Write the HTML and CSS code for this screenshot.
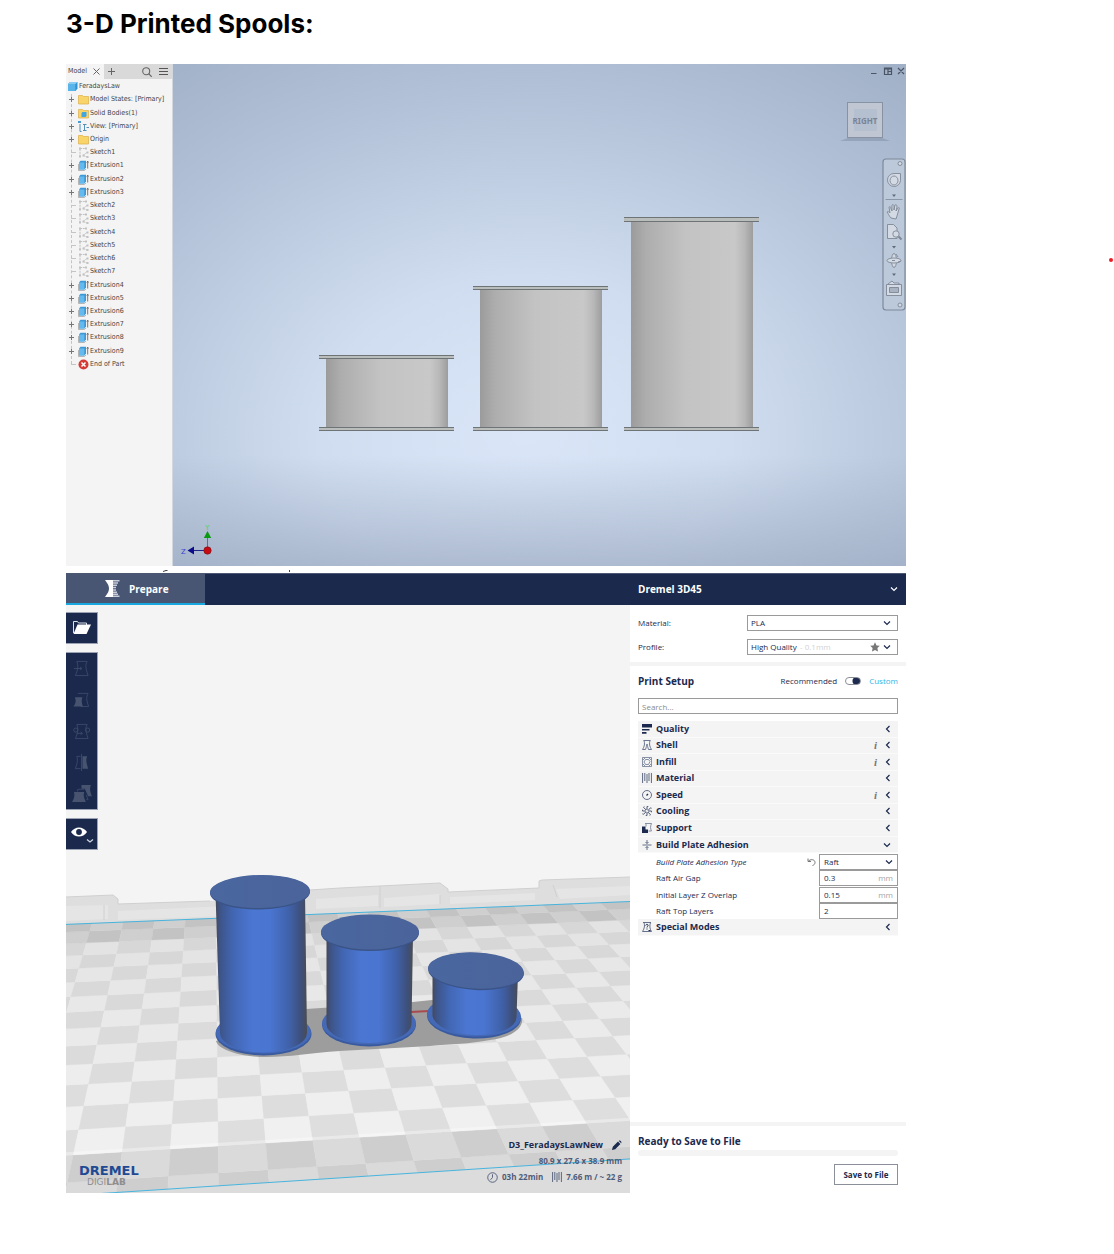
FILE: index.html
```html
<!DOCTYPE html>
<html lang="en">
<head>
<meta charset="utf-8">
<title>3-D Printed Spools</title>
<link rel="stylesheet" href="styles.css">
</head>
<body>
<svg class="defs" aria-hidden="true">
  <defs>
    <linearGradient id="steel" x1="0" x2="1" y1="0" y2="0">
      <stop offset="0" stop-color="#9b9b9b"/><stop offset=".12" stop-color="#adadad"/><stop offset=".45" stop-color="#c3c3c3"/>
      <stop offset=".85" stop-color="#c8c8c8"/><stop offset=".93" stop-color="#b8b8b8"/><stop offset="1" stop-color="#9d9d9d"/>
    </linearGradient>
    <linearGradient id="blue" x1="0" x2="1" y1="0" y2="0">
      <stop offset="0" stop-color="#45495a"/><stop offset=".05" stop-color="#3d5488"/><stop offset=".2" stop-color="#4267b4"/>
      <stop offset=".4" stop-color="#4b76d2"/><stop offset=".6" stop-color="#4a75d0"/><stop offset=".8" stop-color="#4062ab"/>
      <stop offset=".94" stop-color="#3d4f7a"/><stop offset="1" stop-color="#4b4c50"/>
    </linearGradient>
    <linearGradient id="lid" x1="0" x2="1"><stop offset="0" stop-color="#4a679f"/><stop offset="1" stop-color="#4b639b"/></linearGradient>
    <symbol id="i-folder" viewBox="0 0 11 11"><path d="M.5 1.500h4l1 1h5v7.500h-10z" fill="#f9d468" stroke="#dfb455" stroke-width=".8"/></symbol>
    <symbol id="i-bodies" viewBox="0 0 11 11"><path d="M.5 1.500h4l1 1h5v7.500h-10z" fill="#f9d468" stroke="#dfb455" stroke-width=".8"/><path d="M3.500 5l1-1h4v4l-1 1h-4z" fill="#3fa6e0"/></symbol>
    <symbol id="i-view" viewBox="0 0 11 11"><path d="M2 3v7.500h1.500M5 3.500h3.500M6.500 3.500v6M8.500 6.500H11M5 9.500h3.500" fill="none" stroke="#5590b8" stroke-width="1"/><path d="M0 0h3v2H0z" fill="#4b9bd0"/></symbol>
    <symbol id="i-part" viewBox="0 0 11 11"><path d="M1 3l2-2h7.500v6.500l-2 2.500H1z" fill="#2e93d6"/><path d="M1 3h7.300v7H1z" fill="#59b4ea"/><path d="M1 3l2-2h7.500l-2 2z" fill="#8accf2"/></symbol>
    <symbol id="i-ext" viewBox="0 0 11 11"><path d="M.5 4v6.500h6L8 9" fill="none" stroke="#a5a5a5" stroke-width=".8"/><path d="M1 2.500L2.500.7H8v6.500L6.500 9.500H1z" fill="#3f97d4"/><path d="M1 2.500h5.300v7H1z" fill="#64baee"/><path d="M9.700 8.500V1.500M8.700 2.600l1-1.400 1 1.400" stroke="#555" fill="none" stroke-width=".8"/></symbol>
    <symbol id="i-sk" viewBox="0 0 11 11"><path d="M2 2v7.500M2 1.500h6M5 8.500l4-3M5 8.500l4 1.500" fill="none" stroke="#b5b5b5" stroke-width=".8" stroke-dasharray="2 .8"/><path d="M1 .5h2v2H1zM7 .5h2v2H7zM1 8.500h2v2H1zM8.500 4.500h2v2h-2zM8.500 9h2v2h-2zM4.500 7.500h2v2h-2z" fill="#c2c2c2"/></symbol>
    <symbol id="i-end" viewBox="0 0 11 11"><circle cx="5.500" cy="5.500" r="5" fill="#d63a35"/><path d="M3.500 3.500l4 4M7.500 3.500l-4 4" stroke="#fff" stroke-width="1.500"/></symbol>
    <symbol id="i-plus" viewBox="0 0 5 5"><path d="M0 2.500h5M2.500 0v5" stroke="#777" stroke-width="1"/></symbol>
    <symbol id="i-left" viewBox="0 0 6 8"><path d="M4.500 1L1.500 4l3 3" fill="none" stroke="#1b2a4e" stroke-width="1.200"/></symbol>
    <symbol id="i-down" viewBox="0 0 8 6"><path d="M1 1.500l3 3 3-3" fill="none" stroke="currentColor" stroke-width="1.200"/></symbol>
    <symbol id="i-spool" viewBox="0 0 10 10"><path d="M.6 0v10M2.800 0v8M5 1v9M7 0v8M9.400 0v10" stroke="#5c6880" stroke-width="1"/></symbol>
    <symbol id="i-clock" viewBox="0 0 12 12"><circle cx="6" cy="6" r="5.200" fill="none" stroke="#4e5b78" stroke-width="1"/><path d="M6 2.500V6L3.800 8.500" fill="none" stroke="#4e5b78"/></symbol>
  </defs>
</svg>
<main class="doc">
  <h1>3-D Printed Spools:</h1>

  <section class="cad">
    <aside class="browser">
      <div class="tabs">
        <button class="tab">Model <svg width="7" height="7" viewBox="0 0 7 7"><path d="M.5.5l6 6M6.500.5l-6 6" stroke="#666"/></svg></button>
        <button class="tool" aria-label="Add tab"><svg width="7" height="7" viewBox="0 0 7 7"><path d="M0 3.500h7M3.500 0v7" stroke="#666"/></svg></button>
        <span class="fill"></span>
        <button class="tool" aria-label="Search"><svg width="10" height="10" viewBox="0 0 10 10"><circle cx="4.200" cy="4.200" r="3.500" fill="none" stroke="#666" stroke-width="1.100"/><path d="M6.800 6.800l3 3" stroke="#666" stroke-width="1.200"/></svg></button>
        <button class="tool last" aria-label="Menu"><svg width="9" height="9" viewBox="0 0 9 9"><path d="M0 1.500h9M0 4.500h9M0 7.500h9" stroke="#555"/></svg></button>
      </div>
      <ul class="tree" id="tree">
        <li class="root"><svg><use href="#i-part"/></svg>FeradaysLaw</li>
        <li><button aria-label="Expand"><svg><use href="#i-plus"/></svg></button><svg><use href="#i-folder"/></svg>Model States: [Primary]</li>
        <li><button aria-label="Expand"><svg><use href="#i-plus"/></svg></button><svg><use href="#i-bodies"/></svg>Solid Bodies(1)</li>
        <li><button aria-label="Expand"><svg><use href="#i-plus"/></svg></button><svg><use href="#i-view"/></svg>View: [Primary]</li>
        <li><button aria-label="Expand"><svg><use href="#i-plus"/></svg></button><svg><use href="#i-folder"/></svg>Origin</li>
        <li class="leaf"><svg><use href="#i-sk"/></svg>Sketch1</li>
        <li><button aria-label="Expand"><svg><use href="#i-plus"/></svg></button><svg><use href="#i-ext"/></svg>Extrusion1</li>
        <li><button aria-label="Expand"><svg><use href="#i-plus"/></svg></button><svg><use href="#i-ext"/></svg>Extrusion2</li>
        <li><button aria-label="Expand"><svg><use href="#i-plus"/></svg></button><svg><use href="#i-ext"/></svg>Extrusion3</li>
        <li class="leaf"><svg><use href="#i-sk"/></svg>Sketch2</li>
        <li class="leaf"><svg><use href="#i-sk"/></svg>Sketch3</li>
        <li class="leaf"><svg><use href="#i-sk"/></svg>Sketch4</li>
        <li class="leaf"><svg><use href="#i-sk"/></svg>Sketch5</li>
        <li class="leaf"><svg><use href="#i-sk"/></svg>Sketch6</li>
        <li class="leaf"><svg><use href="#i-sk"/></svg>Sketch7</li>
        <li><button aria-label="Expand"><svg><use href="#i-plus"/></svg></button><svg><use href="#i-ext"/></svg>Extrusion4</li>
        <li><button aria-label="Expand"><svg><use href="#i-plus"/></svg></button><svg><use href="#i-ext"/></svg>Extrusion5</li>
        <li><button aria-label="Expand"><svg><use href="#i-plus"/></svg></button><svg><use href="#i-ext"/></svg>Extrusion6</li>
        <li><button aria-label="Expand"><svg><use href="#i-plus"/></svg></button><svg><use href="#i-ext"/></svg>Extrusion7</li>
        <li><button aria-label="Expand"><svg><use href="#i-plus"/></svg></button><svg><use href="#i-ext"/></svg>Extrusion8</li>
        <li><button aria-label="Expand"><svg><use href="#i-plus"/></svg></button><svg><use href="#i-ext"/></svg>Extrusion9</li>
        <li class="leaf"><svg><use href="#i-end"/></svg>End of Part</li>
      </ul>
    </aside>
    <div class="viewport">
      <svg viewBox="0 0 734 502" preserveAspectRatio="xMaxYMid slice" role="img" aria-label="Side view of three spools">
        <g fill="url(#steel)">
          <rect x="154" y="294" width="122" height="70"/><rect x="308" y="225" width="122" height="139"/><rect x="459" y="157" width="122" height="207"/>
        </g>
        <g fill="#b9bdbc">
          <rect x="147" y="291" width="135" height="4"/><rect x="301" y="222" width="135" height="4"/><rect x="452" y="153" width="135" height="5"/>
          <rect x="147" y="363" width="135" height="4"/><rect x="301" y="363" width="135" height="4"/><rect x="452" y="363" width="135" height="4"/>
        </g>
        <path d="M147 291.500h135M147 294.500h135M301 222.500h135M301 225.500h135M452 153.500h135M452 157.500h135M147 363.500h135M147 366.500h135M301 363.500h135M301 366.500h135M452 363.500h135M452 366.500h135" stroke="#6e7375"/>
        <!-- window buttons -->
        <g fill="none" stroke="#4b5566" stroke-width="1.200"><path d="M699 9.500h5.500M712.500 4h7v6.500h-7zM716 4v6.500M712.500 5h7M716 7.500h3.500M726 4l6 6M732 4l-6 6"/></g>
        <!-- view cube -->
        <path d="M676 74h34l8 3h-50z" fill="#7f8da3" opacity=".5"/>
        <rect x="675.500" y="38.500" width="35" height="35" fill="#c0c7d3" stroke="#8792a5"/>
        <rect x="682" y="45" width="23" height="22" fill="#b4bfd0"/>
        <text x="693" y="60" class="cube" text-anchor="middle">RIGHT</text>
        <!-- navigation bar -->
        <rect x="711" y="95" width="22" height="151" rx="3" fill="#bcc9da" stroke="#7e8a9b" stroke-width="1.200"/>
        <g fill="#d3dae3" stroke="#7d8795" stroke-width=".9">
          <circle cx="728" cy="99.500" r="2"/><circle cx="728" cy="241" r="2"/>
          <path d="M722 109.500h6.500v7a6.500 6.500 0 1 1-6.500-7z"/><ellipse cx="722" cy="116.500" rx="4" ry="4.500"/>
          <path d="M719 154c-2-2-3-5-4-6 1-1 2 0 3 1l-1-6c1-1 2 0 2 2l1 2v-6c1-1 2 0 2 1v4l1-5c1-1 2 0 2 2l-1 4 2-3c1-1 2 0 1 1l-2 7-1 3z"/>
          <path d="M715.500 160.500h6l3.500 3.500v10.500h-9.500z"/><circle cx="724" cy="170" r="3.200"/><path d="M726.500 172.500l3 3" stroke-width="2"/>
          <ellipse cx="722" cy="196.500" rx="2.500" ry="7"/><ellipse cx="722" cy="196.500" rx="7" ry="2.500"/><path d="M720 196.500h3M724 190l2 3M726 198l3-1"/>
          <path d="M714.500 220.500h15v11h-15zM716 220l4-3 2 2h5v1.500"/><path d="M717.500 223.500h9v5h-9z" fill="#a9b2c0"/>
        </g>
        <path d="M713.500 135.500h17" stroke="#8b97a8"/>
        <path d="M720 130.500h4l-2 2.500zM720 182h4l-2 2.500zM720 209.500h4l-2 2.500z" fill="#5f6b7c"/>
        <!-- axis triad -->
        <path d="M35.500 486V472" stroke="#2e9c2e"/><path d="M35.500 467l3.700 7h-7.400z" fill="#0c9a12"/>
        <path d="M35 486.500H21" stroke="#22228c"/><path d="M15.500 486.500l6.500-4v8z" fill="#0c0c8a"/>
        <circle cx="35.500" cy="486.500" r="3.700" fill="#c40c12" stroke="#7c1016" stroke-width=".6"/>
        <text x="35.500" y="466" class="axis" text-anchor="middle" fill="#55cf60">Y</text><text x="11.500" y="489.500" class="axis" text-anchor="middle" fill="#4040d0">Z</text>
      </svg>
    </div>
  </section>
  <svg class="scrap" viewBox="0 0 840 7" aria-hidden="true"><path d="M97 5.500l3-1M99.500 4.500h2M223.500 4v2" stroke="#444" fill="none"/></svg>

  <section class="slicer">
    <header class="bar">
      <button class="prepare"><svg width="15" height="17" viewBox="0 0 15 17"><path d="M0 0h8v17H0c3-4 4-6 4-8.500S3 4 0 0z" fill="#fff"/><path d="M8 .7h6.500M8 3h5M8 5.300h4M8 7.600h3M8 9.900h3M8 12.200h4M8 14.300h5M8 16.300h6.500" stroke="#c9cedb" stroke-width="1.500"/></svg>Prepare</button>
      <button class="printer">Dremel 3D45<svg width="8" height="6"><use href="#i-down"/></svg></button>
    </header>
    <div class="work">
      <div class="scene">
        <svg class="plate" viewBox="0 0 564 588" preserveAspectRatio="xMidYMid slice" role="img" aria-label="Three spools on the build plate">
          <path d="M0 292L47 290l5 4v5l92-3 100-11 30-2 100-5 8 6v3l91-4v-7l3-1 88-3v26L0 320z" fill="#dedede"/>
          <path d="M0 301l42-1v14L0 316zM52 306l110-5v10l-110 4zM250 294l62-4v11l-62 3zM318 293l56-4v10l-56 3zM384 292l85-4v7l-85 4zM490 284l74-3v9l-70 4z" fill="#e5e5e5"/>
          <path d="M0 292L47 290l5 4v5l92-3M244 285l30-2 100-5 8 6v3l91-4v-7l3-1 88-3M314 281v22M374 290v9M487 280l4 12M38 300v15" fill="none" stroke="#d0d0d0"/>
          <g id="board"></g>
          <path id="front" fill="#dcdcdc"/>
          <path id="edge" fill="none" stroke="#47b4dd" stroke-width="1"/>
          <path d="M150 436L240 404l107-7 19-2 90 18c2 12-14 20-32 22-20 4-40 4-60 6l-90 5c-30 2-50 6-74 6-28 0-48-8-50-16z" fill="#9d9d9d"/>
          <path d="M345 407l18-1" stroke="#a84a4e" stroke-width="2"/>
          <g>
            <ellipse cx="197.500" cy="429" rx="48" ry="21.500" fill="#3a5a9f"/><ellipse cx="197.500" cy="427.500" rx="47.500" ry="21" fill="#4469b6"/>
            <path d="M149.500 288L154 428a43.500 19.500 0 0 0 87 0L239 288z" fill="url(#blue)"/>
            <ellipse cx="194" cy="287.500" rx="50" ry="17" fill="#3b5488" transform="rotate(-1 194 287)"/><ellipse cx="194" cy="286.500" rx="50" ry="16.500" fill="url(#lid)" transform="rotate(-1 194 287)"/>
          </g>
          <g>
            <ellipse cx="303" cy="420" rx="47" ry="21.500" fill="#3a5a9f"/><ellipse cx="303" cy="418.500" rx="47" ry="21" fill="#4469b6"/>
            <path d="M260.500 330V419a42.500 19 0 0 0 85 0L347 330z" fill="url(#blue)"/>
            <ellipse cx="304" cy="328" rx="49" ry="18" fill="#3b5488"/><ellipse cx="304" cy="327" rx="49" ry="17.500" fill="url(#lid)"/>
          </g>
          <g>
            <ellipse cx="408" cy="412" rx="47" ry="21.500" fill="#3a5a9f" transform="rotate(2 408 412)"/><ellipse cx="408" cy="410.500" rx="47" ry="21" fill="#4469b6" transform="rotate(2 408 410)"/>
            <path d="M366.500 368V410a42 19 2 0 0 84 2L452 368z" fill="url(#blue)"/>
            <ellipse cx="410" cy="366.500" rx="48" ry="18.500" fill="#3b5488" transform="rotate(3 410 366)"/><ellipse cx="410" cy="365.500" rx="48" ry="18" fill="url(#lid)" transform="rotate(3 410 366)"/>
          </g>
        </svg>
        <div class="rail">
          <div class="group"><button aria-label="Open file"><svg width="20" height="16" viewBox="0 0 20 16"><path d="M1.500 13V1.500h4l1 1.500h8v2" fill="none" stroke="#dfe3ea"/><path d="M5.500 4.500H19L14.500 14H1.500z" fill="#fff"/></svg></button></div>
          <div class="group tall">
            <button aria-label="Move"><svg viewBox="0 0 18 18"><path d="M4 1.500h11c-2 4-2 6 1 15H2.500C5 11 6 6 4 1.500zM1 9h8M7.500 7.500L9.500 9l-2 1.500"/></svg></button>
            <button aria-label="Scale"><svg viewBox="0 0 18 18"><path d="M5 2.500h11c-2 4-2 6 .5 14H8"/><path d="M2 6.500h8c-1 3-1 5 .5 10H.5c2.500-4 3-6 1.500-10z" class="solid"/></svg></button>
            <button aria-label="Rotate"><svg viewBox="0 0 18 18"><path d="M4 1.500h11c-2 4-2 6 1 15H2.500C5 11 6 6 4 1.500zM4 11h6M8 9.500l2 1.500-2 1.500"/><circle cx="3" cy="7.500" r="2.200"/><circle cx="15.500" cy="7.500" r="2.200"/></svg></button>
            <button aria-label="Mirror"><svg viewBox="0 0 18 18"><path d="M8 2.500H4c1 4 1 6-1.500 13H8M9 0v18"/><path d="M10 2.500h5c-1.500 4-1 6 1 13h-6z" class="solid"/></svg></button>
            <button aria-label="Model settings"><svg viewBox="0 0 18 18"><path d="M5 7V4.500h7M14 15.500h2l-2-5"/><path d="M9 0h10c-1.500 4-1 6 1 12h-4L12.500 4H9zM1 7.500h11c-1 3-1 4 1.500 10.500H-1c2.500-4 3-6.500 2-10.500z" class="solid"/></svg></button>
          </div>
          <div class="group"><button aria-label="View mode"><svg width="24" height="22" viewBox="0 0 24 22"><path d="M1 9c4-6 12-6 16 0-4 6-12 6-16 0z" fill="#fff"/><circle cx="9" cy="9" r="2.900" fill="#1a294c"/><path d="M17 16.500l3 2.500 3-2.500" fill="none" stroke="#cfd5e2" stroke-width="1.300"/></svg></button></div>
        </div>
        <div class="logo"><b>DREMEL</b><span>DIGI<i>LAB</i></span></div>
        <div class="job">
          <p class="name">D3_FeradaysLawNew <svg width="10" height="10" viewBox="0 0 10 10"><path d="M0 10l.8-3.200L6 1.600 8.400 4 3.200 9.200zM6.800.9c1-1.200 3.400 1 2.400 2.300z" fill="#1b2a4e"/></svg></p>
          <p>80.9 x 27.6 x 38.9 mm</p>
          <p class="stats"><svg width="11" height="11"><use href="#i-clock"/></svg>03h 22min<svg class="sp" width="10" height="10"><use href="#i-spool"/></svg>7.66 m / ~ 22 g</p>
        </div>
      </div>

      <aside class="panel">
        <div class="setup">
          <label for="material">Material:</label>
          <div class="field"><select id="material"><option>PLA</option></select><span class="fill"></span><svg width="8" height="6"><use href="#i-down"/></svg></div>
          <label for="profile">Profile:</label>
          <div class="field"><select id="profile"><option>High Quality</option></select><span class="faint">- 0.1mm</span><span class="fill"></span><svg class="star" width="10" height="10" viewBox="0 0 10 10"><path d="M5 .3l1.500 3.100 3.300.4-2.400 2.300.6 3.400L5 7.900 2 9.500l.6-3.400L.2 3.800l3.300-.4z" fill="#777"/></svg><svg width="8" height="6"><use href="#i-down"/></svg></div>
        </div>
        <div class="print">
          <div class="mode"><h2>Print Setup</h2><span class="fill"></span><label for="mode">Recommended</label><input type="checkbox" id="mode" class="switch" checked><a href="#custom">Custom</a></div>
          <input class="search" type="text" placeholder="Search..." aria-label="Search settings">
          <div class="rows">
            <div class="row"><svg viewBox="0 0 10 10"><path d="M0 0h10v3.500H0zM0 5h7.500v1.500H0zM0 8h4.500v1.700H0z" fill="#1b2a4e"/></svg><b>Quality</b><svg class="chev"><use href="#i-left"/></svg></div>
            <div class="row"><svg viewBox="0 0 10 10"><path d="M1.500.5h7M2 .5c1 3 .5 6-1.500 9h3c1-3 1-3 1-5h1c0 2 0 2 1 5h3C7.500 6.500 7 3.500 8 .5" fill="none" stroke="#6b7790"/></svg><b>Shell</b><em>i</em><svg class="chev"><use href="#i-left"/></svg></div>
            <div class="row"><svg viewBox="0 0 10 10"><path d="M.5.5h9v9h-9z" fill="none" stroke="#6b7790" stroke-width=".8"/><path d="M3 1L1 3M7 1l2 2M9 7L7 9M3 9L1 7M3.500 2.500h3l1.500 2-1.500 3h-3L2 5z" fill="none" stroke="#6b7790" stroke-width=".8"/></svg><b>Infill</b><em>i</em><svg class="chev"><use href="#i-left"/></svg></div>
            <div class="row"><svg><use href="#i-spool"/></svg><b>Material</b><svg class="chev"><use href="#i-left"/></svg></div>
            <div class="row"><svg viewBox="0 0 10 10"><circle cx="5" cy="5" r="4.500" fill="none" stroke="#55627e" stroke-width=".9"/><path d="M4.500 5.500L6 4" stroke="#1b2a4e" stroke-width="1.300"/></svg><b>Speed</b><em>i</em><svg class="chev"><use href="#i-left"/></svg></div>
            <div class="row"><svg viewBox="0 0 10 10"><path d="M5 4V.5l1.500-.5M6 4.500L8.500 1.800l1 .5M6 5h3.500l.5 1.500M5.800 6l2.500 2.500-.5 1M5 6v3.500L3.500 10M4 5.800L1.500 8.300l-1-.5M4 5H.5L0 3.500M4.200 4L1.700 1.500l.5-1" fill="none" stroke="#33415f" stroke-width=".9"/></svg><b>Cooling</b><svg class="chev"><use href="#i-left"/></svg></div>
            <div class="row"><svg viewBox="0 0 10 10"><path d="M3 .5h6.500C8 3.500 8.500 6 9.500 8H6.500M4 .5v3" fill="none" stroke="#7a859b" stroke-width=".9"/><path d="M0 3.500h3.500v3H6V10H0z" fill="#1b2a4e"/></svg><b>Support</b><svg class="chev"><use href="#i-left"/></svg></div>
            <div class="row"><svg viewBox="0 0 10 10"><path d="M.5 5h9M5 0v3.500M3.500 2L5 3.500 6.500 2M5 10V6.500M3.500 8L5 6.500 6.500 8" fill="none" stroke="#55627e" stroke-width=".9"/></svg><b>Build Plate Adhesion</b><svg class="chev open"><use href="#i-down"/></svg></div>
            <div class="sub"><label for="type"><i>Build Plate Adhesion Type</i></label><svg width="9" height="8" viewBox="0 0 9 8"><path d="M1 .5V3.500h3M1.300 3.300C3 1 8 1 8 4.500 8 6 7 7 5.500 7.500" fill="none" stroke="#777"/></svg><div class="field"><select id="type"><option>Raft</option></select><span class="fill"></span><svg width="8" height="6"><use href="#i-down"/></svg></div></div>
            <div class="sub"><label for="gap">Raft Air Gap</label><div class="field"><input id="gap" type="text" value="0.3"><span class="unit">mm</span></div></div>
            <div class="sub"><label for="overlap">Initial Layer Z Overlap</label><div class="field"><input id="overlap" type="text" value="0.15"><span class="unit">mm</span></div></div>
            <div class="sub"><label for="layers">Raft Top Layers</label><div class="field"><input id="layers" type="text" value="2"></div></div>
            <div class="row"><svg viewBox="0 0 10 10"><path d="M1 .5h8M2 .5c1 3 .5 6-1.500 9h9C7.500 6.500 7.500 3.500 8.500.5" fill="none" stroke="#55627e" stroke-width=".9"/><path d="M3.700 3.500C4 1.800 6.500 2 6 3.800 5.800 4.500 5 4.500 5 5.500M5 6.500v1M6.500 8.500h2" fill="none" stroke="#1b2a4e"/></svg><b>Special Modes</b><svg class="chev"><use href="#i-left"/></svg></div>
          </div>
        </div>
        <div class="save">
          <h2>Ready to Save to File</h2>
          <div class="progress"></div>
          <button>Save to File</button>
        </div>
      </aside>
    </div>
  </section>
</main>
<span class="pin"></span>
<script src="board.js"></script>
</body>
</html>
```
FILE: styles.css
```css
* { box-sizing: border-box; }
body { margin: 0; background: #fff; position: relative; font-family: "Open Sans", "Noto Sans", sans-serif; color: #1b2a4e; }
button, input, select { font: inherit; color: inherit; border: 0; background: none; padding: 0; margin: 0; border-radius: 0; outline: 0; }
h1, h2, p, ul { margin: 0; padding: 0; }
svg { flex: none; display: block; }
.defs { position: absolute; width: 0; height: 0; }
.fill { flex: 1; }
.doc { max-width: 972px; padding: 8px 66px 61px; }
h1 { font: 700 26px/32px Inter, sans-serif; color: #000; margin-bottom: 24px; white-space: nowrap; }
.pin { position: absolute; right: 1px; top: 258px; width: 4px; height: 4px; border-radius: 2px; background: #ee1c24; }

.cad { display: grid; grid-template-columns: 107px 1fr; }
.browser { background: #f4f4f4; border-right: 1px solid #d3d8df; font: 7px/13px "DejaVu Sans Condensed", "DejaVu Sans", sans-serif; color: #444; }
.tabs { display: flex; align-items: center; height: 15px; background: #d9d9d9; }
.tab { display: flex; align-items: center; gap: 6px; height: 15px; padding: 0 4px 0 2px; background: #f4f4f4; }
.tool { margin-left: 4px; }
.tool.last { margin: 0 4px 0 7px; }
.tree { list-style: none; display: grid; grid-auto-rows: 1fr; height: 291px; margin: 1px 0 0 5px; position: relative; }
.tree::before { content: ""; position: absolute; left: 0; top: 14px; bottom: 7px; border-left: 1px dashed #c4c4c4; }
.tree li { display: flex; align-items: center; white-space: nowrap; position: relative; gap: 1px; }
.tree li > svg { width: 11px; height: 11px; }
.tree li > button { width: 5px; height: 5px; margin: 0 3px 0 -2px; background: #f4f4f4; }
.tree li > button svg { width: 5px; height: 5px; }
.tree .root { margin-left: -4px; }
.tree .leaf { padding-left: 7px; }
.tree .leaf::before { content: ""; position: absolute; left: 0; width: 5px; border-top: 1px dashed #c4c4c4; }
.viewport { position: relative; aspect-ratio: 733 / 502; background: linear-gradient(rgba(158,172,195,0) 78%, rgba(158,172,195,.7)), radial-gradient(ellipse 80% 90% at 48% 74%, #dae6f8 0, #d0ddf0 35%, #b3c2d8 75%, #9dadc4 110%); }
.viewport svg { width: 100%; height: 100%; }
.cube { font: 700 8px "Noto Sans", sans-serif; fill: #7b8496; }
.axis { font: 7px "DejaVu Sans", sans-serif; }
.scrap { width: 100%; height: 7px; }

.slicer { font-size: 8px; line-height: 12px; }
.bar { display: grid; grid-template-columns: 1fr 276px; height: 32px; background: #1a294c; color: #fff; font-weight: 700; font-size: 10px; border-top: 1px solid #4d5873; }
.prepare { display: flex; align-items: center; gap: 9px; width: 139px; height: 31px; padding-left: 39px; background: #495673; border-bottom: 2px solid #19a7e0; }
.printer { display: flex; align-items: center; justify-content: space-between; height: 30px; padding: 0 8px; }
.work { display: grid; grid-template-columns: 1fr 276px; }
.scene { position: relative; aspect-ratio: 564 / 588; background: #f4f4f4; overflow: hidden; }
.plate { position: absolute; width: 100%; height: 100%; }
.rail { position: absolute; left: 0; top: 7px; display: flex; flex-direction: column; gap: 8px; }
.group { display: flex; flex-direction: column; width: 32px; min-height: 32px; background: #1a294c; border: 1px solid #9aa2b3; border-left: 0; }
.group button { flex: 1; display: flex; align-items: center; justify-content: center; }
.tall { height: 158px; }
.tall svg { width: 17px; height: 17px; overflow: visible; fill: none; stroke: #3c4969; }
.tall .solid { fill: #47536f; stroke: none; }
.logo { position: absolute; left: 13px; bottom: 6px; display: flex; flex-direction: column; color: #1f4a93; }
.logo b { font: 700 13px/12px "DejaVu Sans", sans-serif; }
.logo span { display: flex; font: 9px/10px "DejaVu Sans", sans-serif; color: #8e8e8e; padding-left: 8px; }
.logo i { font-style: normal; font-weight: 700; }
.job { position: absolute; right: 8px; bottom: 8px; text-align: right; font-weight: 700; color: #4e5b78; }
.job p { height: 16px; line-height: 16px; display: flex; align-items: center; justify-content: flex-end; }
.job .name { font-size: 9px; color: #1b2a4e; gap: 9px; }
.job .stats { gap: 4px; }
.sp { margin-left: 5px; }

.panel { display: flex; flex-direction: column; background: #fff; }
.setup { display: grid; grid-template-columns: 1fr 151px; gap: 8px 0; padding: 10px 8px 7px; border-bottom: 4px solid #f4f4f4; align-items: center; }
.field { display: flex; align-items: center; height: 16px; border: 1px solid #9a9a9a; background: #fff; padding: 0 6px 0 3px; }
.field select { appearance: none; }
.field input { width: 100%; min-width: 0; }
.faint { color: #d3d3d3; padding-left: 3px; }
.star { margin-right: 3px; }
.print { padding: 6px 8px; flex: 1; }
.mode { display: flex; align-items: center; height: 18px; margin-bottom: 8px; }
h2 { font-size: 10px; line-height: 14px; font-weight: 700; }
.mode a { color: #35b3e6; text-decoration: none; }
.switch { appearance: none; width: 16px; height: 8px; margin: 0 8px; border: 1px solid #8b8f99; border-radius: 4px; background: radial-gradient(circle at 11px 3px, #1b2a4e 4px, #fff 5px); }
.search { display: block; width: 100%; height: 16px; border: 1px solid #9a9a9a; padding: 0 3px; }
.search::placeholder { color: #8b8b8b; opacity: 1; }
.rows { display: grid; grid-auto-rows: 1fr; height: 215px; margin-top: 7px; }
.row { display: flex; align-items: center; padding: 0 7px 0 4px; background: #f4f4f4; border-bottom: 1px solid #fafafa; font-size: 9px; gap: 4px; }
.row > svg { width: 10px; height: 10px; }
.row b { flex: 1; }
.row em { font: italic 700 11px/12px "Liberation Serif", serif; color: #777; margin-right: 4px; }
.row .chev { width: 6px; height: 8px; }
.row .open { width: 8px; height: 6px; }
.sub { display: flex; align-items: center; padding-left: 18px; }
.sub label { flex: 1; }
.sub > svg { margin-right: 3px; }
.sub .field { width: 79px; padding: 0 4px 0 4px; }
.unit { color: #a5a5a5; }
.save { border-top: 4px solid #f4f4f4; padding: 8px; display: flex; flex-direction: column; }
.progress { height: 6px; border-radius: 3px; background: #f4f4f4; margin: 2px 0 8px; }
.save button { align-self: flex-end; width: 64px; height: 21px; border: 1px solid #8a8f9a; font-weight: 700; }
```
FILE: board.js
```js
// Draws the checkered build plate in perspective.
// Plate corners: columns 0 and 8 on rows 0 and 12, in scene units.
const P00 = [152.3, 541], P80 = [520.7, 518.3], P0n = [150.3, 332.3], P8n = [401, 321.7];

function solve(a, b, c, d) {
  const dx1 = b[0] - d[0], dx2 = c[0] - d[0], sx = a[0] - b[0] + d[0] - c[0];
  const dy1 = b[1] - d[1], dy2 = c[1] - d[1], sy = a[1] - b[1] + d[1] - c[1];
  const det = dx1 * dy2 - dx2 * dy1;
  const g = (sx * dy2 - dx2 * sy) / det, h = (dx1 * sy - sx * dy1) / det;
  return (u, v) => {
    u /= 8; v /= 12;
    const w = g * u + h * v + 1;
    return [((b[0] - a[0] + g * b[0]) * u + (c[0] - a[0] + h * c[0]) * v + a[0]) / w,
            ((b[1] - a[1] + g * b[1]) * u + (c[1] - a[1] + h * c[1]) * v + a[1]) / w];
  };
}
const project = solve(P00, P80, P0n, P8n);
const path = pts => "M" + pts.map(p => p.map(n => n.toFixed(1)).join(" ")).join("L");
const BACK = 13.7, FRONT = -1.45;
let out = "";
for (let v = -2; v < BACK; v++) {
  for (let u = -8; u < 18; u++) {
    const top = Math.min(v + 1, BACK), low = Math.max(v, FRONT);
    const dark = (u + v) % 2 === 0;
    const t = Math.max(0, Math.min(1, v / 12));
    let shade = dark ? 222 - 8 * t : 240 - 14 * t;
    if (v < 0) shade = dark ? 206 : 218;
    if (v >= 12) shade = dark ? 195 : 207;
    const c = Math.round(shade);
    const fill = `rgb(${c},${c},${c})`;
    out += `<path d="${path([project(u, low), project(u + 1, low), project(u + 1, top), project(u, top)])}Z" fill="${fill}" stroke="${fill}" stroke-width=".3"/>`;
  }
}
out += `<path d="${path([project(-8, 0), project(18, 0), project(18, .12), project(-8, .12)])}Z" fill="#fff" opacity=".35"/>`;
document.getElementById("board").innerHTML = out;
const f0 = project(-8, FRONT), f1 = project(18, FRONT), b0 = project(-8, BACK), b1 = project(18, BACK);
document.getElementById("front").setAttribute("d", path([f0, f1, [900, 700], [-300, 700]]) + "Z");
document.getElementById("edge").setAttribute("d", path([f0, f1]) + path([b0, b1]));
```
